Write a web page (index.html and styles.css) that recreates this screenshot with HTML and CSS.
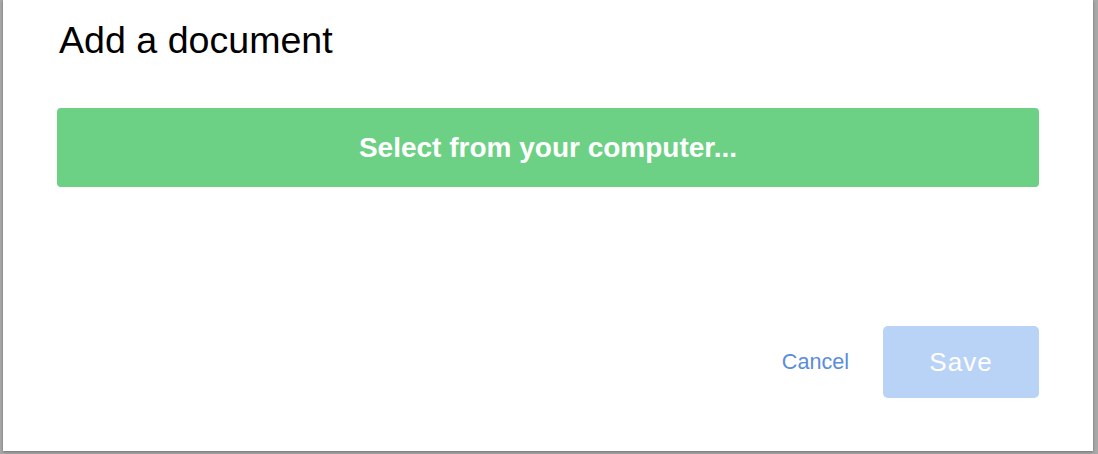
FILE: index.html
```html
<!DOCTYPE html>
<html>
<head>
<meta charset="utf-8">
<link rel="stylesheet" href="styles.css">
</head>
<body>
<div class="modal">
  <h1 class="title">Add a document</h1>
  <button class="select-btn">Select from your computer...</button>
  <div class="actions">
    <a class="cancel">Cancel</a>
    <button class="save-btn">Save</button>
  </div>
</div>
</body>
</html>
```
FILE: styles.css
```css
html, body {
  margin: 0;
  padding: 0;
  height: 100%;
}
body {
  background: #a9a9a9;
  font-family: "Liberation Sans", Arial, Helvetica, sans-serif;
  overflow: hidden;
}
.modal {
  box-sizing: border-box;
  margin-left: 3px;
  width: 1090px;
  height: 451px;
  background: #ffffff;
  box-shadow: 0 1px 3px rgba(0, 0, 0, 0.35);
  padding: 18px 54px 53px 54px;
  display: flex;
  flex-direction: column;
}
.title {
  margin: 0;
  padding-left: 2px;
  font-size: 37.6px;
  font-weight: normal;
  line-height: 44px;
  color: #000;
}
.select-btn {
  margin-top: 46px;
  height: 79px;
  border: none;
  border-radius: 4px;
  background: #6cd185;
  color: #fff;
  font-family: inherit;
  font-size: 28px;
  font-weight: bold;
  width: 100%;
}
.actions {
  margin-top: auto;
  display: flex;
  justify-content: flex-end;
  align-items: center;
  gap: 34px;
}
.cancel {
  color: #5a8ddb;
  font-size: 21.6px;
}
.save-btn {
  width: 156px;
  height: 72px;
  border: none;
  border-radius: 5px;
  background: #b8d3f5;
  color: #fff;
  font-family: inherit;
  font-size: 26px;
  letter-spacing: 1px;
}
```
